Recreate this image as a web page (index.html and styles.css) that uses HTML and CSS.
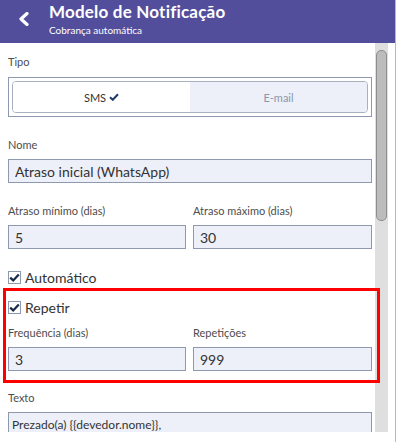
FILE: index.html
```html
<!DOCTYPE html>
<html lang="pt-BR">
<head>
    <meta charset="UTF-8">
    <meta name="viewport" content="width=device-width, initial-scale=1.0">
    <title>Modelo de Notificação</title>
    <link rel="stylesheet" href="styles.css">
</head>
<body>
<div class="app">
    <header class="topbar">
        <button class="back" type="button" aria-label="Voltar">
            <svg width="11" height="14" viewBox="0 0 11 14">
                <polyline points="9,1.5 3,7 9,12.5" fill="none" stroke="#fff" stroke-width="3.2" stroke-linecap="round" stroke-linejoin="round"/>
            </svg>
        </button>
        <div class="titles">
            <h1>Modelo de Notificação</h1>
            <p>Cobrança automática</p>
        </div>
    </header>

    <div class="body">
        <main class="content">
            <div class="field field-tipo">
                <label>Tipo</label>
                <div class="segment">
                    <div class="segment-inner">
                        <button type="button" class="seg active">SMS
                            <svg width="10" height="8" viewBox="0 0 10 8">
                                <polyline points="1,4.2 3.8,6.8 9,1.2" fill="none" stroke="#1d3c6a" stroke-width="2"/>
                            </svg>
                        </button>
                        <button type="button" class="seg">E-mail</button>
                    </div>
                </div>
            </div>

            <div class="field">
                <label for="nome">Nome</label>
                <input type="text" id="nome" class="input" value="Atraso inicial (WhatsApp)">
            </div>

            <div class="row">
                <div class="field">
                    <label for="min">Atraso mínimo (dias)</label>
                    <input type="text" id="min" class="input" value="5">
                </div>
                <div class="field">
                    <label for="max">Atraso máximo (dias)</label>
                    <input type="text" id="max" class="input" value="30">
                </div>
            </div>

            <div class="check">
                <span class="box">
                    <svg width="11" height="9" viewBox="0 0 11 9">
                        <polyline points="1.2,4.6 4.2,7.4 9.8,1.4" fill="none" stroke="#1a2a45" stroke-width="2.2"/>
                    </svg>
                </span>
                Automático
            </div>

            <div class="check check-repeat">
                <span class="box">
                    <svg width="11" height="9" viewBox="0 0 11 9">
                        <polyline points="1.2,4.6 4.2,7.4 9.8,1.4" fill="none" stroke="#1a2a45" stroke-width="2.2"/>
                    </svg>
                </span>
                Repetir
            </div>

            <div class="row row-repeat">
                <div class="field">
                    <label for="freq">Frequência (dias)</label>
                    <input type="text" id="freq" class="input" value="3">
                </div>
                <div class="field">
                    <label for="rep">Repetições</label>
                    <input type="text" id="rep" class="input" value="999">
                </div>
            </div>

            <div class="field">
                <label for="texto">Texto</label>
                <textarea id="texto" class="input textarea">Prezado(a) {{devedor.nome}},</textarea>
            </div>
        </main>
        <div class="scrollbar"><div class="thumb"></div></div>
    </div>

    <div class="highlight"></div>
</div>
</body>
</html>
```

FILE: styles.css
```css
:root {
    --primary-color: #534e9b;
    --field-bg: #edf0f8;
    --field-border: #8e99b0;
    --label-color: #4d4d4d;
    --text-color: #333;
}

body {
    margin: 0;
    padding: 0;
    background-color: #fff;
    font-family: 'Lato', 'Liberation Sans', sans-serif;
    color: var(--text-color);
}

.app {
    position: relative;
    width: 395px;
    height: 442px;
    border-right: 1px solid #c6d40c;
    overflow: hidden;
}

.topbar {
    display: flex;
    align-items: flex-start;
    height: 43px;
    background-color: var(--primary-color);
    color: #fff;
    box-sizing: border-box;
    padding-left: 18px;
}

.back {
    display: flex;
    background: none;
    border: none;
    padding: 0;
    margin-top: 12px;
    margin-right: 20px;
    cursor: pointer;
}

.titles h1 {
    margin: 0;
    padding-top: 2px;
    font-size: 17px;
    line-height: 20px;
    font-weight: 700;
    letter-spacing: 0.2px;
}

.titles p {
    margin: 2px 0 0;
    font-size: 10px;
    line-height: 12px;
}

.body {
    display: flex;
    height: 389px;
}

.content {
    width: 375px;
    box-sizing: border-box;
    padding: 12px 3px 0 8px;
    overflow: hidden;
}

.scrollbar {
    width: 13px;
    background-color: #dfdfdf;
    padding-top: 7px;
    box-sizing: border-box;
}

.thumb {
    width: 11px;
    height: 171px;
    margin-left: 1px;
    background-color: #bcbcbc;
    border: 1px solid #8f8f8f;
    border-radius: 5px;
    box-sizing: border-box;
}

.field {
    margin-bottom: 21px;
}

.field label {
    display: block;
    font-size: 11px;
    line-height: 14px;
    color: var(--label-color);
    margin-bottom: 7px;
}

.field-tipo label {
    margin-bottom: 8px;
}

.segment {
    border: 1px solid var(--field-border);
    padding: 3px;
    background-color: #fff;
}

.segment-inner {
    display: flex;
    height: 32px;
    border: 1px solid #a9b0c0;
    border-radius: 4px;
    overflow: hidden;
    box-sizing: border-box;
}

.seg {
    flex: 1;
    border: none;
    background-color: var(--field-bg);
    color: #8c96aa;
    font-family: inherit;
    font-size: 11px;
    padding: 0;
    display: flex;
    align-items: center;
    justify-content: center;
    gap: 3px;
}

.seg.active {
    background-color: #fff;
    color: var(--text-color);
}

.input {
    display: block;
    width: 100%;
    height: 24px;
    box-sizing: border-box;
    border: 1px solid var(--field-border);
    background-color: var(--field-bg);
    padding: 0 6px;
    font-family: inherit;
    font-size: 14px;
    color: var(--text-color);
    border-radius: 0;
}

.textarea {
    height: 60px;
    padding: 4px 3px;
    font-size: 12px;
    resize: none;
}

.row {
    display: grid;
    grid-template-columns: 178px 1fr;
    gap: 7px;
}

.row .field {
    margin-bottom: 19px;
}

.row-repeat .field {
    margin-bottom: 20px;
}

.check {
    display: flex;
    align-items: center;
    gap: 4px;
    height: 18px;
    font-size: 14px;
    color: var(--text-color);
}

.check-repeat {
    margin-top: 12px;
    margin-bottom: 10px;
}

.box {
    display: flex;
    align-items: center;
    justify-content: center;
    width: 13px;
    height: 13px;
    box-sizing: border-box;
    border: 1px solid var(--field-border);
    background-color: #fff;
}

.highlight {
    position: absolute;
    left: 3px;
    top: 288px;
    width: 377px;
    height: 95px;
    box-sizing: border-box;
    border: 3px solid #ff0000;
    pointer-events: none;
}
```
